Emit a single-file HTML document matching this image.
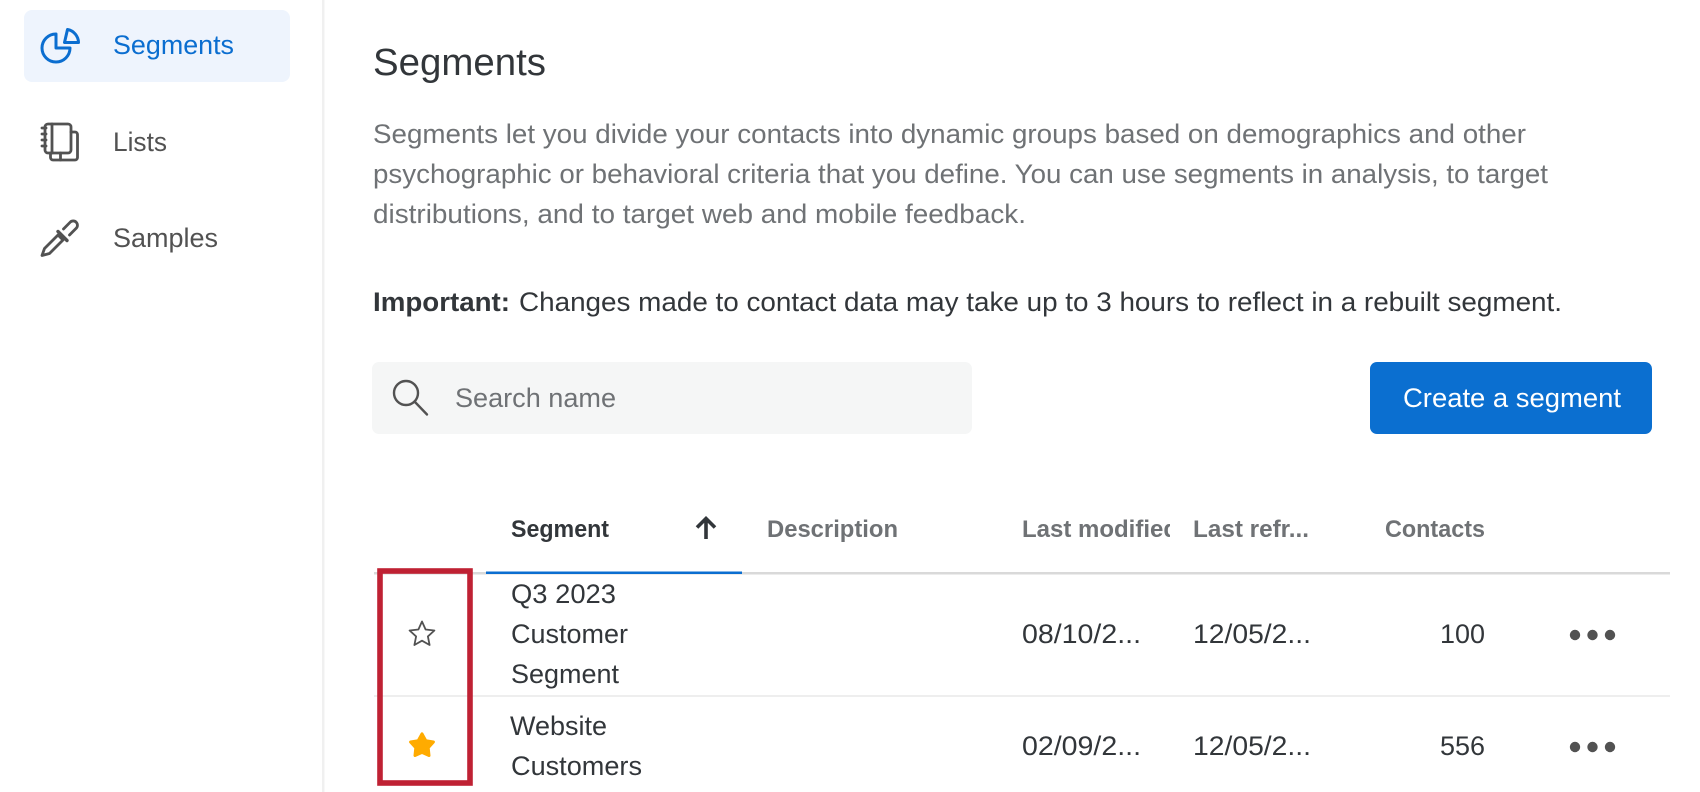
<!DOCTYPE html>
<html><head><meta charset="utf-8"><style>
html,body{margin:0;padding:0;background:#fff;width:1700px;height:792px;overflow:hidden}
svg{display:block}
text{font-family:"Liberation Sans",sans-serif;font-size:27px;fill:#32363a}
.g{fill:#6f7275}.s{fill:#525252}
.b{font-weight:700;font-size:24px}
</style></head><body>
<svg width="1700" height="792" viewBox="0 0 1700 792" xmlns="http://www.w3.org/2000/svg">
<defs><clipPath id="c"><rect x="1015" y="500" width="155" height="60"/></clipPath></defs>
<rect width="1700" height="792" fill="#fff"/>
<rect x="322" y="0" width="2.5" height="792" fill="#f0f0f0"/>
<rect x="24" y="10" width="266" height="72" rx="8" fill="#eef4fd"/>
<g fill="none" stroke="#0b6ed0" stroke-width="3" stroke-linejoin="round" stroke-linecap="round">
<path d="M56 34A14 14 0 1 0 70 48H56Z"/>
<path d="M67.500 29.500L64.500 42.500H78.500A13.500 13.500 0 0 0 67.500 29.500Z"/>
</g>
<text x="113" y="54" textLength="121" lengthAdjust="spacingAndGlyphs" style="fill:#0b6ed0">Segments</text>
<g fill="none" stroke="#525252" stroke-width="2.800" stroke-linejoin="round" stroke-linecap="round">
<rect x="45" y="124" width="26" height="29" rx="3"/>
<path d="M52 124V153"/>
<path d="M71 132H75A2.500 2.500 0 0 1 77.500 134.500V157.500A2.500 2.500 0 0 1 75 160H53A2.500 2.500 0 0 1 50.500 157.500V153"/>
<path d="M60.500 153V160"/>
<path d="M42 128H46M42 134H46M42 140H46M42 146H46"/>
</g>
<text x="113" y="151" textLength="54" lengthAdjust="spacingAndGlyphs" class="s">Lists</text>
<g fill="none" stroke="#525252" stroke-width="2.800" stroke-linejoin="round" stroke-linecap="round">
<path d="M42 255.500L44.500 248.500L58 235L63 240L49.500 253.500Z"/>
<path d="M58 231.500L67 240.500" stroke-width="3.400"/>
<path d="M63.500 229L70.200 222.200A4.200 4.200 0 0 1 76.200 228.200L69.500 235"/>
</g>
<text x="113" y="247" textLength="105" lengthAdjust="spacingAndGlyphs" class="s">Samples</text>

<text x="373" y="75" textLength="173" lengthAdjust="spacingAndGlyphs" style="font-size:38px">Segments</text>
<text x="373" y="143" textLength="1153" lengthAdjust="spacingAndGlyphs" class="g">Segments let you divide your contacts into dynamic groups based on demographics and other</text>
<text x="373" y="183" textLength="1175" lengthAdjust="spacingAndGlyphs" class="g">psychographic or behavioral criteria that you define. You can use segments in analysis, to target</text>
<text x="373" y="223" textLength="653" lengthAdjust="spacingAndGlyphs" class="g">distributions, and to target web and mobile feedback.</text>
<text x="373" y="311" textLength="137" lengthAdjust="spacingAndGlyphs" style="font-weight:700">Important:</text>
<text x="519" y="311" textLength="1043" lengthAdjust="spacingAndGlyphs">Changes made to contact data may take up to 3 hours to reflect in a rebuilt segment.</text>

<rect x="372" y="362" width="600" height="72" rx="7" fill="#f5f6f6"/>
<g fill="none" stroke="#525252" stroke-width="2.400" stroke-linecap="round">
<circle cx="406" cy="393" r="12"/>
<path d="M414.500 401.500L427 414.500"/>
</g>
<text x="455" y="407" textLength="161" lengthAdjust="spacingAndGlyphs" class="g">Search name</text>
<rect x="1370" y="362" width="282" height="72" rx="7" fill="#0b6fd0"/>
<text x="1403" y="407" textLength="218" lengthAdjust="spacingAndGlyphs" style="fill:#fff">Create a segment</text>

<text x="511" y="537" textLength="98" lengthAdjust="spacingAndGlyphs" class="b">Segment</text>
<path d="M706 539V519M697 527.500L706 518.500L715 527.500" fill="none" stroke="#32363a" stroke-width="3.600"/>
<text x="767" y="537" textLength="131" lengthAdjust="spacingAndGlyphs" class="b g">Description</text>
<g clip-path="url(#c)"><text x="1022" y="537" textLength="156" lengthAdjust="spacingAndGlyphs" class="b g">Last modified</text></g>
<text x="1193" y="537" textLength="116" lengthAdjust="spacingAndGlyphs" class="b g">Last refr...</text>
<text x="1385" y="537" textLength="100" lengthAdjust="spacingAndGlyphs" class="b g">Contacts</text>

<rect x="374" y="572" width="1296" height="2.500" fill="#d9d9d9"/>
<rect x="486" y="571.500" width="256" height="2.500" fill="#0b6ed0"/>
<rect x="374" y="695" width="1296" height="2" fill="#eeeeee"/>

<text x="511" y="603" textLength="105" lengthAdjust="spacingAndGlyphs">Q3 2023</text>
<text x="511" y="643" textLength="117" lengthAdjust="spacingAndGlyphs">Customer</text>
<text x="511" y="683" textLength="108" lengthAdjust="spacingAndGlyphs">Segment</text>
<text x="1022" y="643" textLength="119" lengthAdjust="spacingAndGlyphs">08/10/2...</text>
<text x="1193" y="643" textLength="118" lengthAdjust="spacingAndGlyphs">12/05/2...</text>
<text x="1440" y="643" textLength="45" lengthAdjust="spacingAndGlyphs">100</text>
<g fill="#525252"><circle cx="1575" cy="635" r="5.200"/><circle cx="1592.500" cy="635" r="5.200"/><circle cx="1610" cy="635" r="5.200"/>
<circle cx="1575" cy="747" r="5.200"/><circle cx="1592.500" cy="747" r="5.200"/><circle cx="1610" cy="747" r="5.200"/></g>

<text x="510" y="735" textLength="97" lengthAdjust="spacingAndGlyphs">Website</text>
<text x="511" y="775" textLength="131" lengthAdjust="spacingAndGlyphs">Customers</text>
<text x="1022" y="755" textLength="119" lengthAdjust="spacingAndGlyphs">02/09/2...</text>
<text x="1193" y="755" textLength="118" lengthAdjust="spacingAndGlyphs">12/05/2...</text>
<text x="1440" y="755" textLength="45" lengthAdjust="spacingAndGlyphs">556</text>

<path d="M422 621.500L425.600 629.500L434.400 630.500L427.900 636.400L429.600 645L422 640.700L414.400 645L416.100 636.400L409.600 630.500L418.400 629.500Z" fill="none" stroke="#525252" stroke-width="1.800" stroke-linejoin="round"/>
<path d="M422 733.800L425.800 740.700L433.400 742L428.200 747.800L429 755.500L422 752.400L415 755.500L415.800 747.800L410.600 742L418.200 740.700Z" fill="#ffab00" stroke="#ffab00" stroke-width="3" stroke-linejoin="round"/>
<rect x="380" y="571" width="90" height="212" fill="none" stroke="#bf2133" stroke-width="5.600"/>
</svg>
</body></html>
